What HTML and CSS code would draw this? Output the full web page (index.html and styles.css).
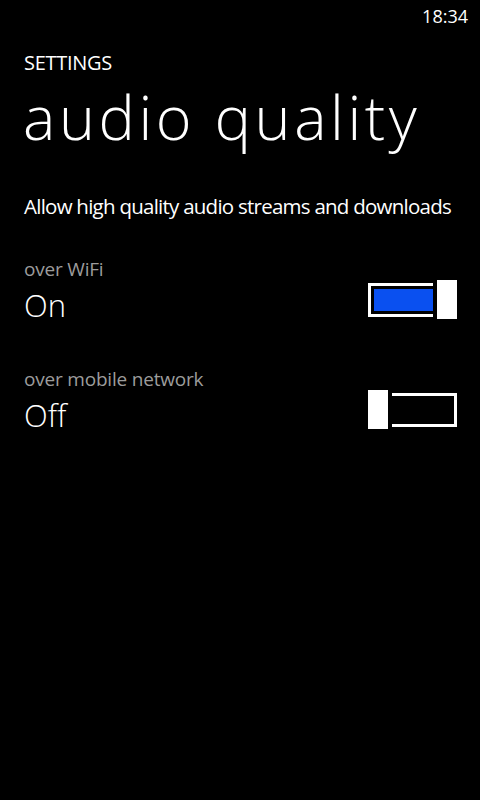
FILE: index.html
```html
<!DOCTYPE html>
<html lang="en">
<head>
    <meta charset="UTF-8">
    <meta name="viewport" content="width=device-width, initial-scale=1.0">
    <title>Settings - audio quality</title>
    <link rel="stylesheet" href="styles.css">
</head>
<body>
    <div class="status-bar">18:34</div>

    <div class="page">
        <div class="app-title">SETTINGS</div>
        <h1 class="page-title">audio quality</h1>

        <p class="description">Allow high quality audio streams and downloads</p>

        <div class="setting">
            <div class="setting-label">over WiFi</div>
            <div class="setting-row">
                <span class="setting-value">On</span>
                <div class="switch on">
                    <div class="track"><div class="fill"></div></div>
                    <div class="thumb"></div>
                </div>
            </div>
        </div>

        <div class="setting">
            <div class="setting-label">over mobile network</div>
            <div class="setting-row">
                <span class="setting-value">Off</span>
                <div class="switch off">
                    <div class="thumb"></div>
                    <div class="track"><div class="fill"></div></div>
                </div>
            </div>
        </div>
    </div>
</body>
</html>
```

FILE: styles.css
```css
body {
    margin: 0;
    background-color: #000;
    color: #fff;
    font-family: "Open Sans", "Noto Sans", sans-serif;
    width: 480px;
    height: 800px;
    overflow: hidden;
}
.status-bar {
    height: 32px;
    line-height: 32px;
    font-size: 18px;
    text-align: right;
    padding-right: 12px;
}
.page {
    padding: 0 23px 0 24px;
}
.app-title {
    margin-top: 17px;
    font-size: 20px;
    line-height: 28px;
    letter-spacing: -0.3px;
}
.page-title {
    margin: 5px 0 0 -1px;
    font-size: 61px;
    line-height: 70px;
    font-weight: 300;
    letter-spacing: 3.6px;
    white-space: nowrap;
}
.description {
    margin: 39px 0 0;
    font-size: 20.5px;
    line-height: 30px;
    letter-spacing: -0.75px;
    white-space: nowrap;
}
.setting {
    margin-top: 35px;
}
.setting + .setting {
    margin-top: 41px;
}
.setting-label {
    font-size: 19px;
    line-height: 26px;
    color: #9c9c9c;
    letter-spacing: -0.2px;
}
.setting-row {
    display: flex;
    justify-content: space-between;
    align-items: flex-start;
    margin-top: 3px;
}
.setting-value {
    font-size: 31px;
    line-height: 40px;
    font-weight: 300;
}
.switch {
    display: flex;
    align-items: center;
    width: 89px;
    height: 39px;
    margin-top: -5px;
    gap: 4px;
}
.track {
    flex: 1;
    height: 34px;
    box-sizing: border-box;
    border: 3px solid #fff;
    padding: 3px;
}
.switch.on .track {
    border-right: none;
    padding-right: 0;
}
.switch.off .track {
    border-left: none;
    padding-left: 0;
}
.fill {
    height: 100%;
}
.switch.on .fill {
    background-color: #0a50f0;
}
.thumb {
    width: 20px;
    height: 39px;
    background-color: #fff;
}
```
